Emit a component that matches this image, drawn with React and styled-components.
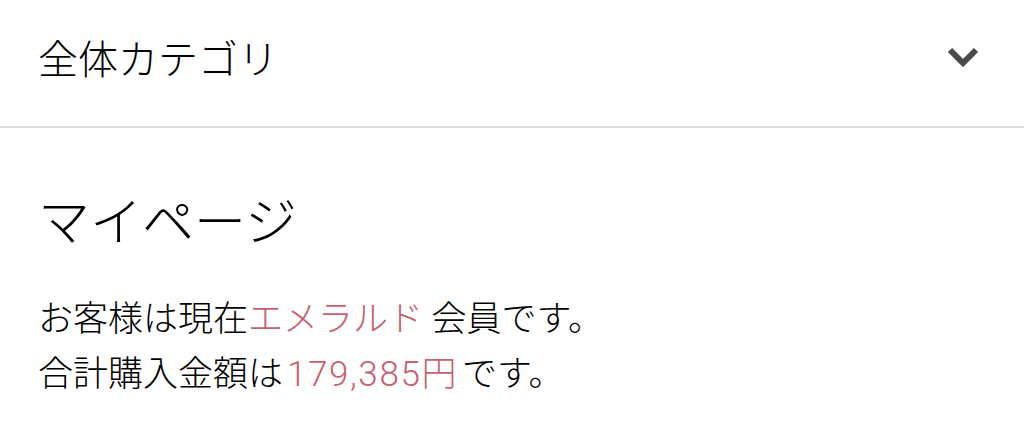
import React from 'react';
import styled, { createGlobalStyle } from 'styled-components';

const GlobalStyle = createGlobalStyle`
  body {
    margin: 0;
    background: #fff;
    font-family: Roboto, "Noto Sans CJK JP", "Noto Sans", sans-serif;
    color: #000;
  }
`;

const Header = styled.header`
  display: flex;
  align-items: center;
  justify-content: space-between;
  height: 126px;
  padding: 0 44px 0 38px;
  border-bottom: 2px solid #dcdcdc;
`;

const HeaderTitle = styled.span`
  font-size: 40px;
  font-weight: 300;
  margin-top: -12px;
`;

const Chevron = styled.svg`
  width: 34px;
  height: 24px;
  margin-top: -12px;
`;

const Section = styled.section`
  padding: 62px 38px 0;
`;

const PageTitle = styled.h1`
  margin: 0 0 34px;
  font-size: 52px;
  font-weight: 300;
  line-height: 1.3;
`;

const Text = styled.p`
  margin: 0;
  font-size: 35px;
  font-weight: 300;
  line-height: 55px;
`;

const Accent = styled.span`
  color: #c9606f;
`;

const Amount = styled(Accent)`
  letter-spacing: 1.6px;
  margin: 0 4px 0 4px;
`;

const App = () => {
  return (
    <>
      <GlobalStyle />
      <Header>
        <HeaderTitle>全体カテゴリ</HeaderTitle>
        <Chevron viewBox='0 0 34 24'>
          <path
            d='M4 5 L17 18 L30 5'
            fill='none'
            stroke='#4a4a4a'
            strokeWidth='6'
          />
        </Chevron>
      </Header>
      <Section>
        <PageTitle>マイページ</PageTitle>
        <Text>
          お客様は現在<Accent>エメラルド</Accent> 会員です。
        </Text>
        <Text>
          合計購入金額は<Amount>179,385円</Amount>です。
        </Text>
      </Section>
    </>
  );
};

export default App;
